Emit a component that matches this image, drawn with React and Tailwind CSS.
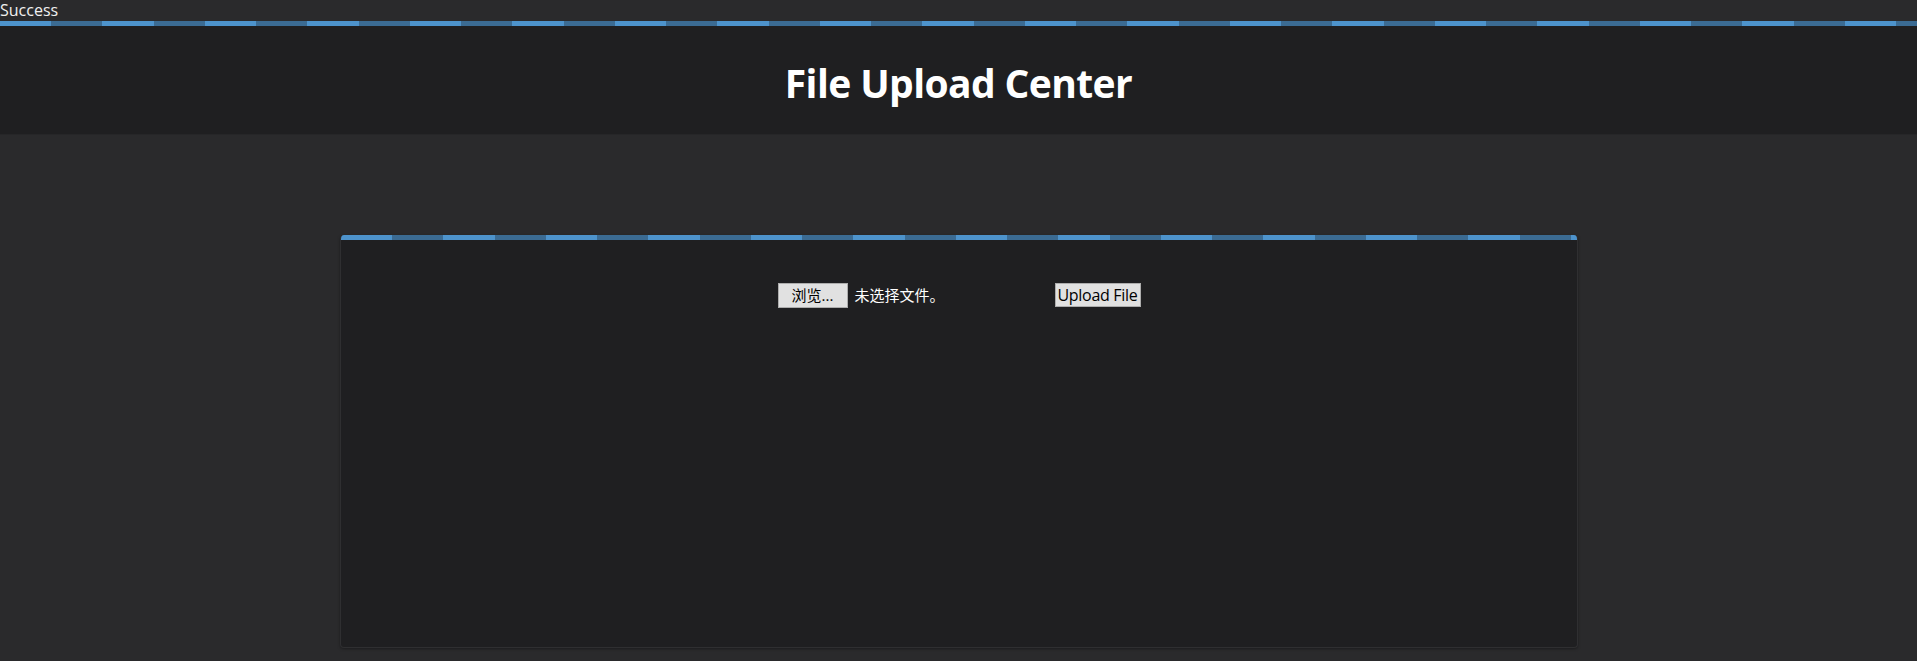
const stripe =
  "bg-[repeating-linear-gradient(90deg,#4d93cc_0px,#4d93cc_51.25px,#3b6b93_51.25px,#3b6b93_102.5px)]";

export default function App() {
  return (
    <div className="min-h-[661px] bg-[#2a2a2c] text-white font-['Open_Sans','Noto_Sans_CJK_SC',sans-serif]">
      <div className="h-[21px] text-[16px] leading-[21px] text-[#f0f0f0]">Success</div>
      <div className={`h-[5px] ${stripe}`} />
      <header className="flex h-[108px] items-center justify-center bg-[#1f1f21] shadow-[0_1px_0_#262628]">
        <h1 className="pt-[5px] text-[39px] font-bold leading-none tracking-[-0.6px]">File Upload Center</h1>
      </header>
      <div className="pt-[101px]">
        <div className="mx-auto h-[413px] w-[1238px] overflow-hidden rounded-[4px] border border-t-0 border-[#2f2f31] bg-[#1f1f21] shadow-[0_1px_3px_rgba(0,0,0,0.35)]">
          <div className={`h-[5px] ${stripe}`} />
          <form className="flex justify-center pl-[1px] pt-[43px]">
            <div className="flex w-[273px] items-center">
              <button
                type="button"
                className="h-[25px] w-[70px] border border-[#adadad] bg-[#e1e1e1] text-[15px] leading-none text-black"
              >
                浏览...
              </button>
              <span className="ml-[7px] text-[15px] text-white">未选择文件。</span>
            </div>
            <button
              type="button"
              className="ml-[4px] h-[24px] w-[86px] border border-[#adadad] bg-[#e1e1e1] text-[16px] leading-none tracking-[-0.3px] text-black"
            >
              Upload File
            </button>
          </form>
        </div>
      </div>
    </div>
  );
}
